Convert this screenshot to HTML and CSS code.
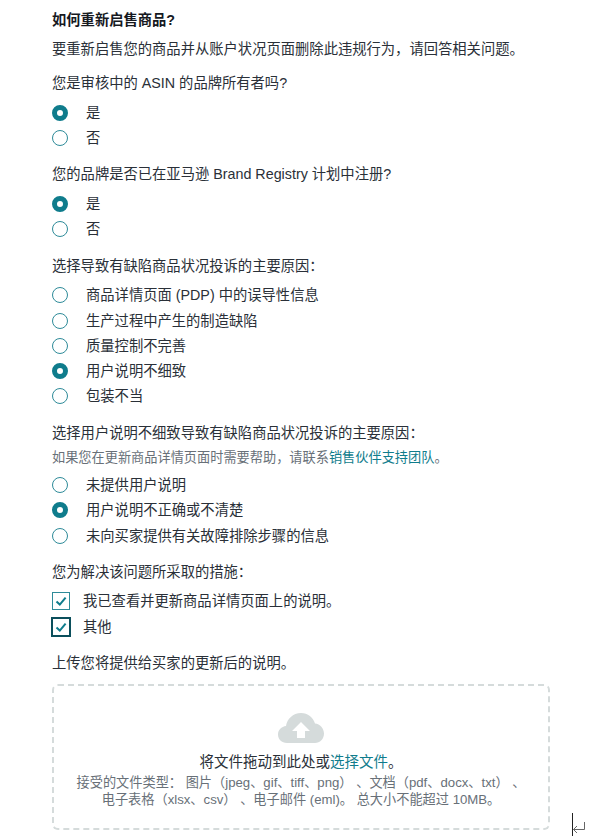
FILE: index.html
```html
<!DOCTYPE html>
<html lang="zh-CN">
<head>
    <meta charset="UTF-8">
    <meta name="viewport" content="width=device-width, initial-scale=1.0">
    <title>如何重新启售商品</title>
    <link rel="stylesheet" href="styles.css">
</head>
<body>
    <main class="form">
        <h3 class="form-title">如何重新启售商品?</h3>
        <p class="intro">要重新启售您的商品并从账户状况页面删除此违规行为，请回答相关问题。</p>

        <section class="group">
            <p class="question">您是审核中的 ASIN 的品牌所有者吗?</p>
            <div class="option"><span class="radio checked"></span><span>是</span></div>
            <div class="option"><span class="radio"></span><span>否</span></div>
        </section>

        <section class="group">
            <p class="question">您的品牌是否已在亚马逊 Brand Registry 计划中注册?</p>
            <div class="option"><span class="radio checked"></span><span>是</span></div>
            <div class="option"><span class="radio"></span><span>否</span></div>
        </section>

        <section class="group">
            <p class="question">选择导致有缺陷商品状况投诉的主要原因：</p>
            <div class="option"><span class="radio"></span><span>商品详情页面 (PDP) 中的误导性信息</span></div>
            <div class="option"><span class="radio"></span><span>生产过程中产生的制造缺陷</span></div>
            <div class="option"><span class="radio"></span><span>质量控制不完善</span></div>
            <div class="option"><span class="radio checked"></span><span>用户说明不细致</span></div>
            <div class="option"><span class="radio"></span><span>包装不当</span></div>
        </section>

        <section class="group">
            <p class="question">选择用户说明不细致导致有缺陷商品状况投诉的主要原因：</p>
            <p class="help">如果您在更新商品详情页面时需要帮助，请联系<a href="#">销售伙伴支持团队</a>。</p>
            <div class="option"><span class="radio"></span><span>未提供用户说明</span></div>
            <div class="option"><span class="radio checked"></span><span>用户说明不正确或不清楚</span></div>
            <div class="option"><span class="radio"></span><span>未向买家提供有关故障排除步骤的信息</span></div>
        </section>

        <section class="group">
            <p class="question tight">您为解决该问题所采取的措施：</p>
            <div class="option check-option">
                <span class="checkbox"><svg viewBox="0 0 16 16" width="16" height="16"><path d="M3.5 8.5 L6.8 11.6 L12.6 4.6" fill="none" stroke="#0f7c8c" stroke-width="2"/></svg></span>
                <span>我已查看并更新商品详情页面上的说明。</span>
            </div>
            <div class="option check-option">
                <span class="checkbox focused"><svg viewBox="0 0 16 16" width="16" height="16"><path d="M3.5 8.5 L6.8 11.6 L12.6 4.6" fill="none" stroke="#0f7c8c" stroke-width="2"/></svg></span>
                <span>其他</span>
            </div>
        </section>

        <section class="group">
            <p class="question">上传您将提供给买家的更新后的说明。</p>
            <div class="dropzone">
                <svg class="cloud" viewBox="0 0 46 30" width="46" height="30">
                    <path d="M9 30 C3.5 30 0 26 0 21.5 C0 17 3.5 13.5 8 13 C9 6 15 0 23 0 C30 0 35 4.5 37 10.5 C42 11 46 15.5 46 20.5 C46 26 42 30 37 30 Z" fill="#d5dbdb"/>
                    <path d="M23 9 L32 18 L27 18 L27 25 L19 25 L19 18 L14 18 Z" fill="#fff"/>
                </svg>
                <p class="drop-text">将文件拖动到此处或<a href="#">选择文件</a>。</p>
                <p class="drop-note">接受的文件类型： 图片（jpeg、gif、tiff、png） 、文档（pdf、docx、txt） 、<br>电子表格（xlsx、csv） 、电子邮件 (eml)。 总大小不能超过 10MB。</p>
            </div>
        </section>
    </main>

    <!-- 右下角的编辑器光标和换行符 -->
    <div class="caret">
        <svg class="return-mark" viewBox="0 0 14 12" width="14" height="12"><path d="M12.5 1 V8.5 H1.5 M5 5 L1.5 8.5 L5 12" fill="none" stroke="#666" stroke-width="1"/></svg>
    </div>
</body>
</html>
```

FILE: styles.css
```css
* {
    margin: 0;
    padding: 0;
    box-sizing: border-box;
}

body {
    font-family: "Liberation Sans", "Noto Sans CJK SC", sans-serif;
    font-size: 14.3px;
    line-height: 20px;
    color: #2a3038;
    background: #fff;
    height: 836px;
    overflow: hidden;
    position: relative;
}

a {
    color: #0f7c8c;
    text-decoration: none;
}

.form {
    width: 498px;
    margin-left: 52px;
    padding-top: 10px;
}

.form-title {
    font-size: 14.3px;
    line-height: 20px;
    font-weight: 700;
    color: #16191f;
}

.intro {
    margin-top: 9px;
}

.group {
    margin-top: 14px;
}

.question {
    margin-bottom: 7px;
}

.question.tight {
    margin-bottom: 6px;
}

.help {
    font-size: 13.2px;
    line-height: 18px;
    color: #687078;
    margin-top: -1px;
    margin-bottom: 6px;
}

.option {
    display: flex;
    align-items: center;
    gap: 18px;
    height: 25.2px;
}

.check-option {
    gap: 12px;
    height: 25.5px;
}

.radio {
    width: 16px;
    height: 16px;
    border: 1.5px solid #2e8b99;
    border-radius: 50%;
    background: #fff;
    flex-shrink: 0;
}

.radio.checked {
    border: 5px solid #0f7c8c;
}

.checkbox {
    width: 18px;
    height: 18px;
    margin-right: 1px;
    border: 1.5px solid #2e8b99;
    display: flex;
    align-items: center;
    justify-content: center;
    flex-shrink: 0;
}

.checkbox.focused {
    border: 2px solid #0b4f5c;
    width: 20px;
    height: 20px;
    margin-left: -1px;
    margin-right: 0;
}

.dropzone {
    height: 146px;
    margin-top: 11px;
    border: 2px dashed #d5dbdb;
    border-radius: 6px;
    display: flex;
    flex-direction: column;
    align-items: center;
    padding-top: 27px;
    text-align: center;
}

.cloud {
    display: block;
    margin-bottom: 9px;
}

.drop-text {
    font-size: 14.5px;
}

.drop-note {
    font-size: 13.2px;
    line-height: 17px;
    color: #687078;
    margin-top: 2px;
}

/* 光标 */
.caret {
    position: absolute;
    left: 572px;
    top: 813px;
    width: 1px;
    height: 23px;
    background: #222;
}

.return-mark {
    position: absolute;
    left: 0;
    top: 8px;
}
```
